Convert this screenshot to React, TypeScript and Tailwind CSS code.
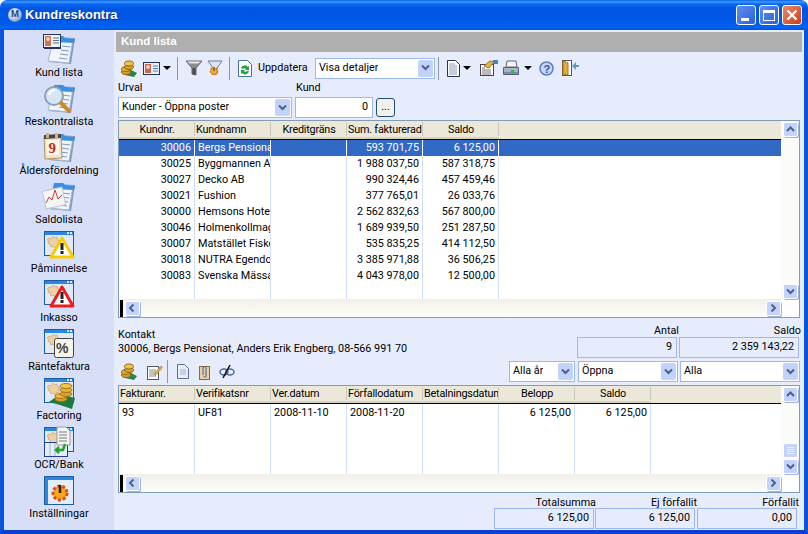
import React from 'react';

const font = { fontFamily: 'Roboto, "Liberation Sans", Arial, sans-serif' };

const customers = [
  ['30006', 'Bergs Pensionat', '', '593 701,75', '6 125,00'],
  ['30025', 'Byggmannen AB', '', '1 988 037,50', '587 318,75'],
  ['30027', 'Decko AB', '', '990 324,46', '457 459,46'],
  ['30021', 'Fushion', '', '377 765,01', '26 033,76'],
  ['30000', 'Hemsons Hotell', '', '2 562 832,63', '567 800,00'],
  ['30046', 'Holmenkollmagasin', '', '1 689 939,50', '251 287,50'],
  ['30007', 'Matstället Fisken', '', '535 835,25', '414 112,50'],
  ['30018', 'NUTRA Egendom', '', '3 385 971,88', '36 506,25'],
  ['30083', 'Svenska Mässan', '', '4 043 978,00', '12 500,00'],
];

// Sidebar icon pieces
const Gear = () => (
  <path d="M5 10l2-2 2 1 2-3 2 2 2-1 1 3 2 1-2 2 1 2-3 1-1 2-2-2-2 1-1-3-2-1 1-2z" fill="#efcfa4" stroke="#d4b186" />
);

const WindowBase: React.FC<{ children?: React.ReactNode }> = ({ children }) => (
  <svg width="34" height="32" viewBox="0 0 34 32">
    <rect x="2" y="1" width="30" height="25" fill="#1a5ca6" />
    <rect x="3" y="2" width="28" height="3" fill="#2c86e0" />
    <rect x="3" y="5" width="28" height="20" fill="#dfe9f8" />
    <rect x="25" y="2" width="2" height="2" fill="#dfe9f8" />
    <rect x="28" y="2" width="2" height="2" fill="#dfe9f8" />
    <Gear />
    {children}
  </svg>
);

const DocStack: React.FC<{ children?: React.ReactNode }> = ({ children }) => (
  <svg width="34" height="32" viewBox="0 0 34 32">
    <path d="M13 3l20 1-4 26-22-2z" fill="#7f9cc0" />
    <path d="M12 4l19 1-4 24-21-2z" fill="#f1f5fb" stroke="#a4b7cf" />
    <path d="M12 2l9 0 2 2 10 1-1 4-21-1z" fill="#3b8ee2" />
    <path d="M20 12l8 1M19 16l8 1M18 20l8 1M17 24l8 1" stroke="#7e97b8" />
    {children}
  </svg>
);

const SideIcon: React.FC<{ name: string }> = ({ name }) => {
  if (name === 'Kund lista')
    return (
      <DocStack>
        <rect x="1.500" y="0.500" width="17" height="13" fill="#eef3fb" stroke="#26345c" />
        <rect x="3" y="2" width="6" height="10" fill="#cf7650" />
        <circle cx="6" cy="5" r="2" fill="#f3cdb0" />
        <path d="M11 4h6M11 6.500h6M11 9h6" stroke="#5a6f99" />
        <path d="M2 14.500h17" stroke="#26345c" />
      </DocStack>
    );
  if (name === 'Reskontralista')
    return (
      <DocStack>
        <circle cx="12" cy="13" r="9" fill="#d7e6f5" stroke="#8fa0b4" strokeWidth="2" />
        <path d="M7 12a6 6 0 016-5" stroke="#fff" strokeWidth="2" fill="none" />
        <path d="M18 19l10 10" stroke="#c98a2a" strokeWidth="4" />
      </DocStack>
    );
  if (name === 'Åldersfördelning')
    return (
      <DocStack>
        <path d="M2 5l17-1 1 22-17 1z" fill="#f3e4c6" stroke="#a8946a" />
        <path d="M2 3l17-1 0 4-17 1z" fill="#4d4638" />
        <rect x="4" y="1" width="3" height="5" fill="#d6b27a" />
        <rect x="13" y="1" width="3" height="5" fill="#d6b27a" />
        <rect x="5" y="8" width="12" height="15" fill="#fbf6ea" />
        <text x="6.500" y="21" fontSize="15" fontWeight="bold" fill="#b92f1c" fontFamily="Liberation Serif">9</text>
      </DocStack>
    );
  if (name === 'Saldolista')
    return (
      <DocStack>
        <rect x="2" y="8" width="20" height="18" fill="#f5f5f5" stroke="#c2c5cc" transform="rotate(-12 12 17)" />
        <path d="M4 22l3-6 3 3 3-10 3 9 4-4" stroke="#d0393b" fill="none" />
      </DocStack>
    );
  if (name === 'Påminnelse' || name === 'Inkasso') {
    const colour = name === 'Inkasso' ? '#ee1c1c' : '#f8cc00';
    return (
      <WindowBase>
        <path d="M20 8l11 19H9z" fill="#fff" stroke={colour} strokeWidth="3" strokeLinejoin="round" />
        <path d="M20 13v7" stroke="#222" strokeWidth="3" />
        <rect x="18.500" y="21" width="3" height="3" fill="#222" />
      </WindowBase>
    );
  }
  if (name === 'Räntefaktura')
    return (
      <WindowBase>
        <rect x="12.500" y="10.500" width="19" height="19" rx="2" fill="#f6f3e8" stroke="#444" />
        <text x="14" y="25" fontSize="14" fontWeight="bold" fill="#444" fontFamily="Liberation Sans">%</text>
      </WindowBase>
    );
  if (name === 'Factoring')
    return (
      <WindowBase>
        <path d="M7 25l11-8 15 4-3 11-12-4z" fill="#1f7a40" />
        <ellipse cx="19" cy="22" rx="6" ry="2.500" fill="#d9a12a" stroke="#a87414" />
        <ellipse cx="19" cy="19" rx="6" ry="2.500" fill="#eebb3c" stroke="#a87414" />
        <ellipse cx="24" cy="17" rx="6" ry="2.500" fill="#d9a12a" stroke="#a87414" />
        <ellipse cx="24" cy="13" rx="6" ry="2.500" fill="#e6b034" stroke="#a87414" />
        <ellipse cx="24" cy="9" rx="6" ry="2.500" fill="#f2c648" stroke="#a87414" />
      </WindowBase>
    );
  if (name === 'OCR/Bank')
    return (
      <WindowBase>
        <rect x="2.500" y="16.500" width="23" height="14" fill="#e6edf7" stroke="#23408f" />
        <path d="M8 17v13M13 17v13" stroke="#9db3d0" />
        <path d="M15 1h9l4 4v14H15z" fill="#f5f5f5" stroke="#9a9a9a" />
        <path d="M17 6h8M17 9h8M17 12h8M17 15h8" stroke="#777" />
        <path d="M23 18l-2 6h-7m3-3l-3 3 3 3" fill="none" stroke="#22a52e" strokeWidth="2.500" />
      </WindowBase>
    );
  return (
    <svg width="34" height="32" viewBox="0 0 34 32">
      <rect x="2" y="1" width="30" height="29" fill="#1a5ca6" />
      <rect x="3" y="2" width="28" height="3" fill="#2c86e0" />
      <rect x="3" y="5" width="28" height="24" fill="#e3ecf9" />
      <path d="M3 5h3v24H3z" fill="#2c86e0" />
      <circle cx="18" cy="18" r="7" fill="#f5a81c" stroke="#e04a1a" strokeWidth="3" strokeDasharray="3 2" />
      <path d="M18 10v8" stroke="#222" strokeWidth="2.500" />
    </svg>
  );
};

const navItems = ['Kund lista', 'Reskontralista', 'Åldersfördelning', 'Saldolista', 'Påminnelse', 'Inkasso', 'Räntefaktura', 'Factoring', 'OCR/Bank', 'Inställningar'];

// Toolbar icons
const Coins = () => (
  <svg width="18" height="17" viewBox="0 0 18 17" className="block">
    <path d="M1 11l8-2 8 4-3 4-9-2z" fill="#2d8050" />
    <ellipse cx="6" cy="12" rx="4.500" ry="2.500" fill="#d79f2a" stroke="#94690f" />
    <ellipse cx="6" cy="9" rx="4.500" ry="2.500" fill="#e4b03a" stroke="#94690f" />
    <ellipse cx="9" cy="7" rx="4.500" ry="2.500" fill="#d79f2a" stroke="#94690f" />
    <ellipse cx="9" cy="3.500" rx="4.500" ry="2.500" fill="#f0c24a" stroke="#94690f" />
  </svg>
);
const Card = () => (
  <svg width="17" height="13" viewBox="0 0 17 13" className="block">
    <rect x="0.500" y="0.500" width="16" height="12" fill="#e9f0fb" stroke="#26345c" />
    <rect x="2" y="2" width="6" height="9" fill="#c9674a" />
    <circle cx="5" cy="5" r="2" fill="#f3d0b0" />
    <path d="M10 4h5M10 6.500h5M10 9h5" stroke="#5a78b0" />
  </svg>
);
const Caret = () => <span className="block w-0 h-0 border-x-[4px] border-x-transparent border-t-[4px] border-t-black" />;
const Sep = () => <div className="w-px h-[23px] bg-[#8b96ab]" />;
const Funnel = () => (
  <svg width="18" height="16" viewBox="0 0 18 16" className="block">
    <path d="M1 1h16l-6 7v7l-4-1V8z" fill="#8c8c8c" stroke="#666" />
    <path d="M2 1.500h14l-3 2H5z" fill="#e8e8e8" />
    <path d="M7.500 8v6l3 1V8z" fill="#4a4a4a" />
  </svg>
);
const FunnelGear = () => (
  <svg width="16" height="16" viewBox="0 0 16 16" className="block">
    <path d="M1 1h14l-5 7v6H6V8z" fill="#dfe5f0" stroke="#6c7d9c" />
    <circle cx="7" cy="11" r="3.500" fill="#eeb030" stroke="#c8701a" strokeWidth="1.500" strokeDasharray="2 1" />
    <path d="M7 8v3" stroke="#333" />
  </svg>
);
const Refresh = () => (
  <svg width="14" height="17" viewBox="0 0 14 17" className="block">
    <path d="M0.500 0.500h9l4 4v12h-13z" fill="#fff" stroke="#4a6fa5" />
    <path d="M3 8a4 4 0 017-1l1-1v4H7l1-1a2 2 0 00-3 0z" fill="#1ea53c" />
    <path d="M11 11a4 4 0 01-7 2l-1 1v-4h4l-1 1a2 2 0 003 0z" fill="#1ea53c" />
  </svg>
);
const Page = () => (
  <svg width="13" height="17" viewBox="0 0 13 17" className="block">
    <path d="M0.500 0.500h8l4 4v12h-12z" fill="#fff" stroke="#26345c" />
    <path d="M2 4h6M2 6h8M2 8h8M2 10h8M2 12h8M2 14h8" stroke="#8c9ab5" />
  </svg>
);
const Props = () => (
  <svg width="18" height="16" viewBox="0 0 18 16" className="block">
    <rect x="0.500" y="4.500" width="13" height="11" fill="#fff" stroke="#444" />
    <path d="M2 8h3M2 10h9M2 12h9M2 14h9" stroke="#777" />
    <path d="M4 6l6-5 4 1-5 6z" fill="#e8b447" stroke="#9a7420" />
    <rect x="13" y="0" width="5" height="4" fill="#4a7ec8" />
  </svg>
);
const Printer = () => (
  <svg width="16" height="16" viewBox="0 0 16 16" className="block">
    <path d="M4 1h9l1 6H3z" fill="#f5f5f5" stroke="#667" />
    <path d="M0.500 7.500h15v7h-15z" fill="#a9b4c6" stroke="#55607a" />
    <path d="M1 12h14v2H1z" fill="#7d8aa3" />
    <rect x="8" y="10" width="3" height="3" fill="#22c03c" />
  </svg>
);
const Help = () => (
  <svg width="15" height="15" viewBox="0 0 15 15" className="block">
    <circle cx="7.500" cy="7.500" r="6.500" fill="#c6d7f5" stroke="#5b7fc7" strokeWidth="1.500" />
    <text x="4.500" y="11.500" fontSize="11" fontWeight="bold" fill="#2f55a8" fontFamily="Liberation Sans">?</text>
  </svg>
);
const Door = () => (
  <svg width="17" height="16" viewBox="0 0 17 16" className="block">
    <rect x="0.500" y="0.500" width="9" height="15" fill="#fff" stroke="#555" />
    <path d="M1 1l5 2v12l-5-1z" fill="#e6a93a" stroke="#a5741b" />
    <path d="M17 5h-3V2l-4 4 4 4V7h3z" fill="#6a92cf" />
  </svg>
);
const Note = () => (
  <svg width="16" height="16" viewBox="0 0 16 16" className="block">
    <rect x="0.500" y="2.500" width="11" height="13" fill="#fff" stroke="#556" />
    <path d="M2 6h7M2 8h7M2 10h7M2 12h7" stroke="#888" />
    <path d="M7 10l7-8 1.500 1.500-7 8z" fill="#e2b23a" stroke="#8a6a18" strokeWidth="0.500" />
  </svg>
);
const PlainDoc = () => (
  <svg width="12" height="15" viewBox="0 0 12 15" className="block">
    <path d="M0.500 0.500h7l4 4v10h-11z" fill="#e8eef9" stroke="#5c6f96" />
    <path d="M3 6h6M3 8h6M3 10h6" stroke="#a6b4d0" />
  </svg>
);
const Clip = () => (
  <svg width="11" height="16" viewBox="0 0 11 16" className="block">
    <rect x="0.500" y="2.500" width="10" height="13" fill="#e8cfa0" stroke="#8c6a30" />
    <path d="M4 11V4a1.500 1.500 0 013 0v8a1 1 0 01-2 0" fill="none" stroke="#3d5f9c" />
  </svg>
);
const Link = () => (
  <svg width="16" height="15" viewBox="0 0 16 15" className="block">
    <ellipse cx="5" cy="8" rx="4" ry="3" fill="none" stroke="#4f6c9f" strokeWidth="1.500" />
    <ellipse cx="11" cy="8" rx="4" ry="3" fill="none" stroke="#4f6c9f" strokeWidth="1.500" />
    <path d="M4 14L11 1" stroke="#111" strokeWidth="1.500" />
  </svg>
);

const Chevron: React.FC<{ dir?: 'up' | 'down' | 'left' | 'right' }> = ({ dir = 'down' }) => {
  const d = {
    down: 'M1 1.500l3.500 3.500 3.500-3.500',
    up: 'M1 5l3.500-3.500 3.500 3.500',
    left: 'M5.500 0.500l-3.500 3.500 3.500 3.500',
    right: 'M2.500 0.500l3.500 3.500-3.500 3.500',
  }[dir];
  return (
    <svg width="9" height="8" viewBox="0 0 9 8">
      <path d={d} fill="none" stroke="#4d6185" strokeWidth="2" />
    </svg>
  );
};

const ScrollBtn: React.FC<{ dir: 'up' | 'down' | 'left' | 'right' }> = ({ dir }) => (
  <div className="w-[15px] h-[15px] rounded-[2px] border border-white bg-[#c3d3fd] flex items-center justify-center shadow-[1px_1px_0_#9fb2de]">
    <Chevron dir={dir} />
  </div>
);

const Combo: React.FC<{ label: string; width: string }> = ({ label, width }) => (
  <div className={`${width} h-[21px] bg-white border border-[#9db8f0] flex items-center justify-between pl-[3px] pr-px shrink-0`}>
    <span className="truncate">{label}</span>
    <div className="w-[15px] h-[17px] bg-[#c1d2fb] rounded-[2px] flex items-center justify-center"><Chevron /></div>
  </div>
);

const SumBox: React.FC<{ label: string; value: string; width: string; tight?: boolean }> = ({ label, value, width, tight }) => (
  <div className={`${width} shrink-0 flex flex-col items-end`}>
    <span className="leading-[13px] h-[13px] -mr-[2px]">{label}</span>
    <div className={`w-full h-[21px] border border-[#9db8f0] flex items-center justify-end pr-[4px] ${tight ? '-mt-px' : ''}`}>{value}</div>
  </div>
);

const HeadCell: React.FC<{ label: string; align?: string }> = ({ label, align = 'justify-start pl-px' }) => (
  <div className={`w-[76px] shrink-0 h-full flex items-center pt-[2px] ${align} tracking-[-0.2px] overflow-hidden whitespace-nowrap relative`}>
    {label}
    <span className="absolute right-0 top-[1px] bottom-[1px] w-px bg-[#c9c7ba]" />
  </div>
);

const Cell: React.FC<{ text: string; right?: boolean; selected?: boolean }> = ({ text, right, selected }) => (
  <div className={`w-[76px] shrink-0 h-full overflow-hidden whitespace-nowrap border-r ${selected ? 'border-white' : 'border-[#d3def8]'} ${right ? 'text-right pr-[3px]' : 'pl-[3px]'}`}>
    {text}
  </div>
);

const HScroll = () => (
  <div className="h-[18px] flex items-center bg-white shrink-0">
    <div className="flex-1 h-full flex items-center bg-gradient-to-b from-[#f1efe8] to-[#fdfdfb]">
      <div className="w-[3px] h-[17px] bg-black ml-[1px] mr-[2px]" />
      <ScrollBtn dir="left" />
      <div className="flex-1" />
      <ScrollBtn dir="right" />
    </div>
    <div className="w-[18px]" />
  </div>
);

export default function App() {
  return (
    <div className="w-[808px] h-[534px] flex flex-col text-[10.8px] text-black overflow-hidden bg-white" style={font}>
      {/* title bar */}
      <div className="h-[30px] shrink-0 rounded-t-[7px] bg-[linear-gradient(180deg,#0a5fe0_0%,#3b9bff_6%,#0a66ee_14%,#0054e3_30%,#0058e8_70%,#0064f2_92%,#0050d8_100%)] flex items-center pl-[8px] pr-[6px]">
        <div className="w-[14px] h-[14px] rounded-full bg-[radial-gradient(circle_at_40%_35%,#ffffff,#a9bfe0_55%,#2b4c8a)] flex items-center justify-center text-[9px] font-bold text-[#26457f]">M</div>
        <span className="ml-[3px] text-white font-bold text-[13px] [text-shadow:1px_1px_0_#0a2d88]" style={{ fontFamily: '"Liberation Sans", sans-serif' }}>Kundreskontra</span>
        <div className="flex-1" />
        <div className="flex gap-[3px]">
          <div className="w-[20px] h-[20px] rounded-[3px] border border-white bg-[linear-gradient(135deg,#5f8ff0,#2a5fd8)] flex items-end pl-[4px] pb-[3px]"><div className="w-[8px] h-[3px] bg-white" /></div>
          <div className="w-[20px] h-[20px] rounded-[3px] border border-white bg-[linear-gradient(135deg,#5f8ff0,#2a5fd8)] flex items-center justify-center"><div className="w-[12px] h-[11px] border border-white border-t-[3px]" /></div>
          <div className="w-[20px] h-[20px] rounded-[3px] border border-white bg-[linear-gradient(135deg,#ec8a6c,#c93e18)] flex items-center justify-center">
            <svg width="12" height="12" viewBox="0 0 12 12"><path d="M1.500 1.500l9 9M10.500 1.500l-9 9" stroke="#fff" strokeWidth="2.200" /></svg>
          </div>
        </div>
      </div>

      {/* window body */}
      <div className="flex-1 min-h-0 border-x-[4px] border-b-[4px] border-x-[#0855dd] border-b-[#0a3fcf] flex">
        <div className="w-[110px] shrink-0 bg-[#d6dff7] pt-[3px] flex flex-col items-center">
          {navItems.map((name) => (
            <div key={name} className="h-[49px] w-full shrink-0 flex flex-col items-center">
              <div className="h-[33px] flex items-center justify-center"><SideIcon name={name} /></div>
              <span className="leading-[14px] whitespace-nowrap">{name}</span>
            </div>
          ))}
        </div>

        <div className="flex-1 min-w-0 bg-[#e6ecfb] pl-[2px] pt-[2px] pr-[2px] flex flex-col">
          <div className="h-[20px] shrink-0 bg-[#afafaf] text-white font-bold text-[11.5px] flex items-center pl-[5px]" style={{ fontFamily: '"Liberation Sans", sans-serif' }}>Kund lista</div>

          {/* toolbar */}
          <div className="h-[27px] shrink-0 flex items-center pl-[4px] pt-[5px]">
            <Coins />
            <span className="ml-[5px]"><Card /></span>
            <span className="ml-[3px]"><Caret /></span>
            <span className="ml-[6px]"><Sep /></span>
            <span className="ml-[7px]"><Funnel /></span>
            <span className="ml-[4px]"><FunnelGear /></span>
            <span className="ml-[6px]"><Sep /></span>
            <span className="ml-[8px]"><Refresh /></span>
            <span className="ml-[6px] w-[52px] whitespace-nowrap">Uppdatera</span>
            <span className="ml-[5px]"><Combo label="Visa detaljer" width="w-[120px]" /></span>
            <span className="ml-[3px]"><Sep /></span>
            <span className="ml-[8px]"><Page /></span>
            <span className="ml-[3px]"><Caret /></span>
            <span className="ml-[9px]"><Props /></span>
            <span className="ml-[5px]"><Printer /></span>
            <span className="ml-[5px]"><Caret /></span>
            <span className="ml-[7px]"><Help /></span>
            <span className="ml-[8px]"><Door /></span>
          </div>

          {/* urval */}
          <div className="h-[14px] shrink-0 flex items-end pl-[2px] leading-[13px] mt-[1px]">
            <span className="w-[178px]">Urval</span>
            <span>Kund</span>
          </div>
          <div className="h-[21px] shrink-0 flex items-center pl-[2px] mt-[3px]">
            <Combo label="Kunder - Öppna poster" width="w-[174px]" />
            <div className="ml-[3px] w-[78px] h-[21px] border border-[#9db8f0] bg-white flex items-center justify-end pr-[4px]">0</div>
            <div className="ml-[3px] w-[19px] h-[19px] rounded-[3px] border border-[#1f4d7a] bg-[#f2f2ea] flex items-center justify-center leading-none">...</div>
          </div>

          {/* customers grid */}
          <div className="mt-[2px] mx-[2px] h-[198px] shrink-0 border border-[#7f9db9] bg-white flex flex-col relative">
            <div className="flex-1 min-h-0 mr-[18px] flex flex-col">
              <div className="h-[16px] shrink-0 bg-[#ebe8d9] flex">
                <HeadCell label="Kundnr." align="justify-center" />
                <HeadCell label="Kundnamn" />
                <HeadCell label="Kreditgräns" align="justify-center" />
                <HeadCell label="Sum. fakturerad" />
                <HeadCell label="Saldo" align="justify-center" />
              </div>
              <div className="h-[2px] shrink-0 flex"><div className="w-[380px] bg-[#d6d2c2]" /><div className="flex-1 bg-[#ebe8d9]" /></div>
              <div className="h-px shrink-0 flex"><div className="w-full bg-black" /></div>
              <div className="flex-1 min-h-0 flex flex-col relative">
                {customers.map((row, i) => (
                  <div key={row[0]} className={`h-[16px] shrink-0 flex leading-[16px] ${i === 0 ? 'bg-[#316ac5] text-white' : ''}`}>
                    <Cell text={row[0]} right selected={i === 0} />
                    <Cell text={row[1]} selected={i === 0} />
                    <Cell text={row[2]} selected={i === 0} />
                    <Cell text={row[3]} right selected={i === 0} />
                    <Cell text={row[4]} right selected={i === 0} />
                  </div>
                ))}
                <div className="flex-1 flex">
                  {[0, 1, 2, 3, 4].map((c) => <div key={c} className="w-[76px] border-r border-[#d3def8]" />)}
                </div>
              </div>
            </div>
            <div className="absolute right-0 top-0 bottom-[18px] w-[18px] bg-[#fbfbf8] flex flex-col items-center justify-between pt-[1px]">
              <ScrollBtn dir="up" />
              <ScrollBtn dir="down" />
            </div>
            <HScroll />
          </div>

          {/* contact + totals */}
          <div className="h-[41px] shrink-0 flex pl-[2px] pr-[3px] pt-[6px]">
            <div className="flex-1 leading-[14px] pt-[4px]">
              <div>Kontakt</div>
              <div>30006, Bergs Pensionat, Anders Erik Engberg, 08-566 991 70</div>
            </div>
            <SumBox label="Antal" value="9" width="w-[100px]" />
            <SumBox label="Saldo" value="2 359 143,22" width="w-[120px] ml-[2px]" />
          </div>

          {/* second toolbar */}
          <div className="h-[23px] shrink-0 flex items-center pl-[4px] mt-[1px] pr-[2px]">
            <Coins />
            <span className="ml-[9px]"><Note /></span>
            <span className="ml-[4px]"><Sep /></span>
            <span className="ml-[9px]"><PlainDoc /></span>
            <span className="ml-[10px]"><Clip /></span>
            <span className="ml-[9px]"><Link /></span>
            <div className="flex-1" />
            <Combo label="Alla år" width="w-[66px]" />
            <span className="w-[3px]" />
            <Combo label="Öppna" width="w-[100px]" />
            <span className="w-[2px]" />
            <Combo label="Alla" width="w-[120px]" />
          </div>

          {/* invoice grid */}
          <div className="mt-[2px] mx-[2px] h-[108px] shrink-0 border border-[#7f9db9] bg-white flex flex-col relative">
            <div className="flex-1 min-h-0 mr-[18px] flex flex-col">
              <div className="h-[15px] shrink-0 bg-[#ebe8d9] flex">
                <HeadCell label="Fakturanr." />
                <HeadCell label="Verifikatsnr" />
                <HeadCell label="Ver.datum" />
                <HeadCell label="Förfallodatum" />
                <HeadCell label="Betalningsdatum" />
                <HeadCell label="Belopp" align="justify-center" />
                <HeadCell label="Saldo" align="justify-center" />
              </div>
              <div className="h-[2px] shrink-0 flex"><div className="w-[532px] bg-[#d6d2c2]" /><div className="flex-1 bg-[#ebe8d9]" /></div>
              <div className="h-px shrink-0 bg-black" />
              <div className="h-[17px] shrink-0 flex leading-[18px]">
                <Cell text="93" />
                <Cell text="UF81" />
                <Cell text="2008-11-10" />
                <Cell text="2008-11-20" />
                <Cell text="" />
                <Cell text="6 125,00" right />
                <Cell text="6 125,00" right />
              </div>
              <div className="flex-1 flex">
                {[0, 1, 2, 3, 4, 5, 6].map((c) => <div key={c} className="w-[76px] border-r border-[#d3def8]" />)}
              </div>
            </div>
            <div className="absolute right-0 top-0 bottom-[18px] w-[18px] bg-[#fbfbf8] flex flex-col items-center pt-[1px]">
              <ScrollBtn dir="up" />
              <div className="flex-1" />
              <div className="w-[15px] h-[15px] rounded-[2px] border border-white bg-[#c3d3fd] flex flex-col items-center justify-center gap-px mb-px">
                <div className="w-[7px] h-px bg-[#eef3ff]" /><div className="w-[7px] h-px bg-[#eef3ff]" /><div className="w-[7px] h-px bg-[#eef3ff]" /><div className="w-[7px] h-px bg-[#eef3ff]" />
              </div>
              <ScrollBtn dir="down" />
            </div>
            <HScroll />
          </div>

          {/* bottom totals */}
          <div className="flex justify-end pr-[5px] mt-[3px]">
            <SumBox tight label="Totalsumma" value="6 125,00" width="w-[100px]" />
            <SumBox tight label="Ej förfallit" value="6 125,00" width="w-[100px] ml-px" />
            <SumBox tight label="Förfallit" value="0,00" width="w-[100px] ml-[2px]" />
          </div>
        </div>
      </div>
    </div>
  );
}
